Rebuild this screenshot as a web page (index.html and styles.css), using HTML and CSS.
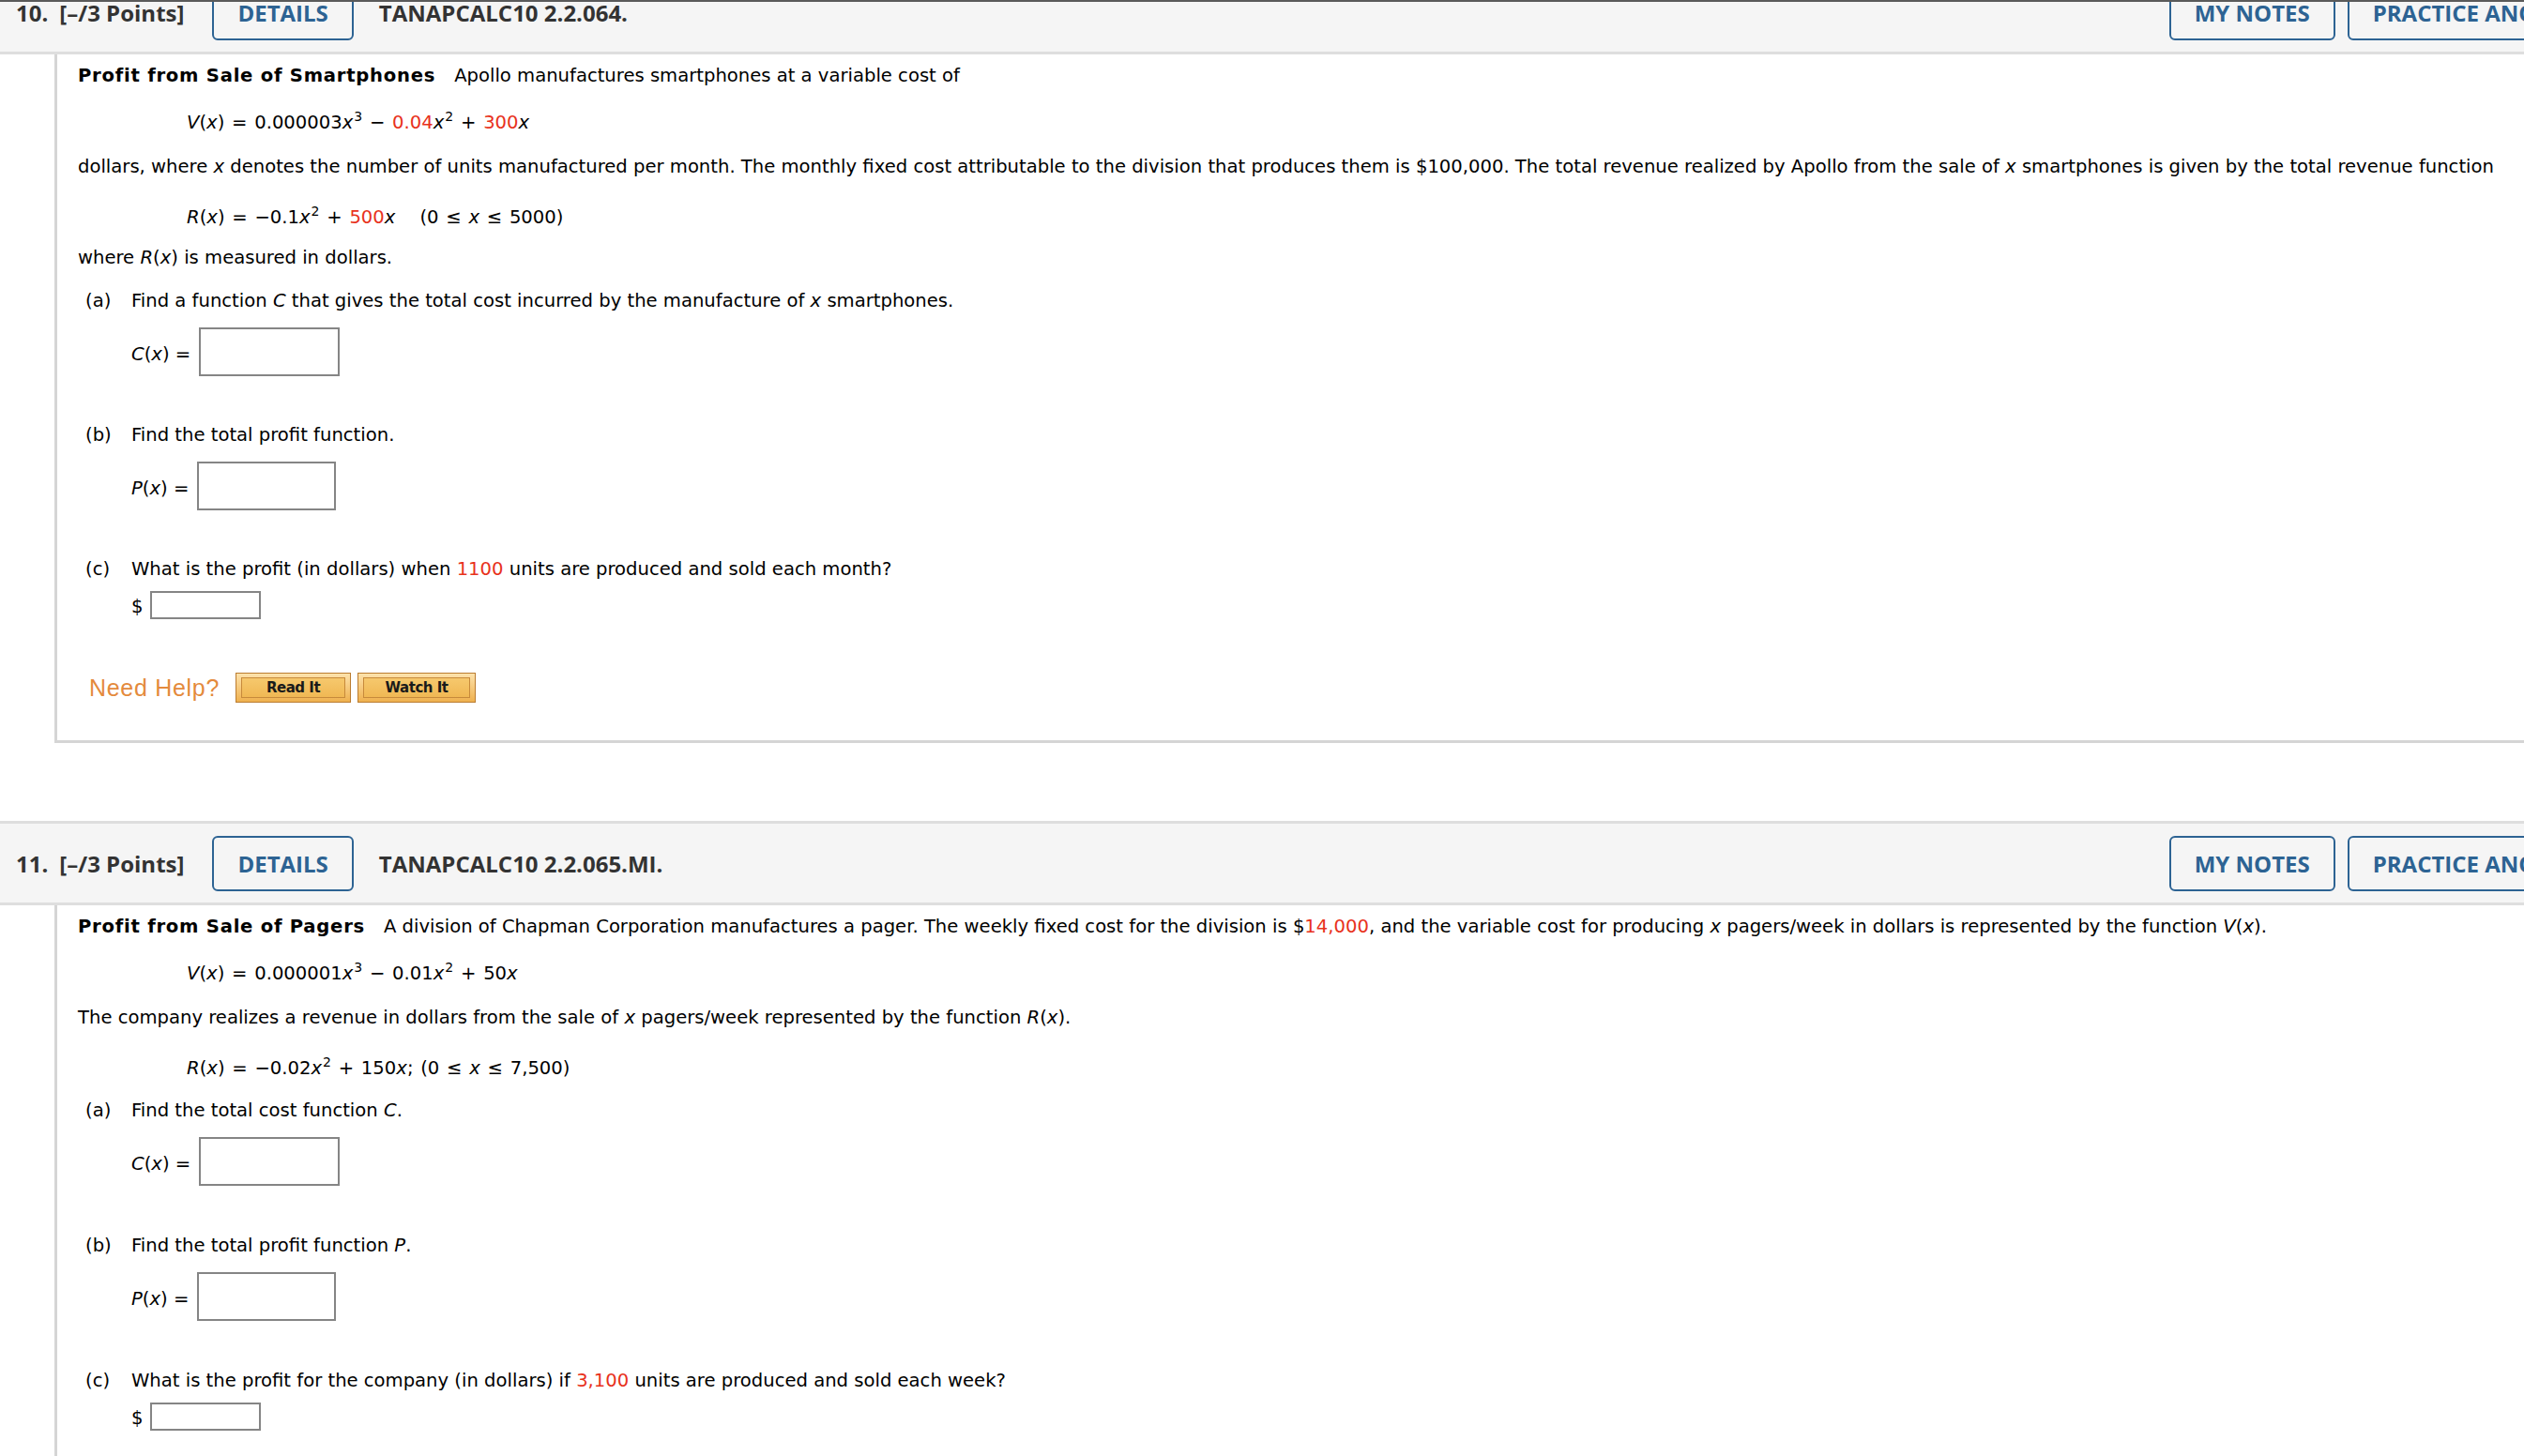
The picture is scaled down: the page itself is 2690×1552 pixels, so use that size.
FILE: index.html
```html
<!DOCTYPE html>
<html lang="en">
<head>
<meta charset="utf-8">
<title>Questions</title>
<link rel="stylesheet" href="styles.css">
</head>
<body>
<div class="topline"></div>
<div class="page">

  <section class="question">
    <header class="qhead">
      <span class="qnum">10.</span>
      <span class="qpts">[–/3 Points]</span>
      <button class="hbtn">DETAILS</button>
      <span class="qid">TANAPCALC10 2.2.064.</span>
      <div class="actions">
        <button class="hbtn">MY NOTES</button>
        <button class="hbtn">PRACTICE ANOTHER</button>
      </div>
    </header>
    <div class="qbody">
      <p class="txt"><b class="qtitle">Profit from Sale of Smartphones</b>Apollo manufactures smartphones at a variable cost of</p>
      <p class="eq eq-first"><i>V</i>(<i>x</i>) = 0.000003<i>x</i><sup>3</sup> − <span class="red">0.04</span><i>x</i><sup>2</sup> + <span class="red">300</span><i>x</i></p>
      <p class="txt txt-after-eq">dollars, where <i>x</i> denotes the number of units manufactured per month. The monthly fixed cost attributable to the division that produces them is $100,000. The total revenue realized by Apollo from the sale of <i>x</i> smartphones is given by the total revenue function</p>
      <p class="eq eq-after-txt"><i>R</i>(<i>x</i>) = −0.1<i>x</i><sup>2</sup> + <span class="red">500</span><i>x</i><span class="range">(0 ≤ <i>x</i> ≤ 5000)</span></p>
      <p class="txt txt-after-eq2">where <i>R</i>(<i>x</i>) is measured in dollars.</p>
      <div class="part part-after-txt"><span class="plabel">(a)</span><span>Find a function <i>C</i> that gives the total cost incurred by the manufacture of <i>x</i> smartphones.</span></div>
      <div class="answer"><span class="alabel"><i>C</i>(<i>x</i>) =</span><span class="abox"></span></div>
      <div class="part part-after-box"><span class="plabel">(b)</span><span>Find the total profit function.</span></div>
      <div class="answer"><span class="alabel"><i>P</i>(<i>x</i>) =</span><span class="abox abox-p"></span></div>
      <div class="part part-after-box"><span class="plabel">(c)</span><span>What is the profit (in dollars) when <span class="red">1100</span> units are produced and sold each month?</span></div>
      <div class="answer answer-dollar"><span class="dlabel">$</span><span class="dbox"></span></div>
      <div class="help">
        <span class="needhelp">Need Help?</span>
        <span class="hbtn2"><span class="hbtn2-in">Read It</span></span>
        <span class="hbtn2 hbtn2-wide"><span class="hbtn2-in">Watch It</span></span>
      </div>
    </div>
  </section>

  <section class="question">
    <header class="qhead">
      <span class="qnum">11.</span>
      <span class="qpts">[–/3 Points]</span>
      <button class="hbtn">DETAILS</button>
      <span class="qid">TANAPCALC10 2.2.065.MI.</span>
      <div class="actions">
        <button class="hbtn">MY NOTES</button>
        <button class="hbtn">PRACTICE ANOTHER</button>
      </div>
    </header>
    <div class="qbody qbody-open">
      <p class="txt"><b class="qtitle">Profit from Sale of Pagers</b>A division of Chapman Corporation manufactures a pager. The weekly fixed cost for the division is $<span class="red">14,000</span>, and the variable cost for producing <i>x</i> pagers/week in dollars is represented by the function <i>V</i>(<i>x</i>).</p>
      <p class="eq eq-first"><i>V</i>(<i>x</i>) = 0.000001<i>x</i><sup>3</sup> − 0.01<i>x</i><sup>2</sup> + 50<i>x</i></p>
      <p class="txt txt-after-eq">The company realizes a revenue in dollars from the sale of <i>x</i> pagers/week represented by the function <i>R</i>(<i>x</i>).</p>
      <p class="eq eq-after-txt"><i>R</i>(<i>x</i>) = −0.02<i>x</i><sup>2</sup> + 150<i>x</i>; (0 ≤ <i>x</i> ≤ 7,500)</p>
      <div class="part part-after-eq"><span class="plabel">(a)</span><span>Find the total cost function <i>C</i>.</span></div>
      <div class="answer"><span class="alabel"><i>C</i>(<i>x</i>) =</span><span class="abox"></span></div>
      <div class="part part-after-box2"><span class="plabel">(b)</span><span>Find the total profit function <i>P</i>.</span></div>
      <div class="answer"><span class="alabel"><i>P</i>(<i>x</i>) =</span><span class="abox abox-p"></span></div>
      <div class="part part-after-box2"><span class="plabel">(c)</span><span>What is the profit for the company (in dollars) if <span class="red">3,100</span> units are produced and sold each week?</span></div>
      <div class="answer answer-dollar"><span class="dlabel">$</span><span class="dbox"></span></div>
    </div>
  </section>

</div>
</body>
</html>
```

FILE: styles.css
```css
html, body {
  margin: 0;
  padding: 0;
  background: #ffffff;
  overflow: hidden;
}

body {
  font-family: "DejaVu Sans", Verdana, sans-serif;
  font-size: 19.6px;
  color: #000;
}

.topline {
  position: fixed;
  top: 0;
  left: 0;
  right: 0;
  height: 2px;
  background: #5a5a5a;
  z-index: 5;
}

.page {
  width: 2809px;
  margin-top: -32px;
}

.question + .question {
  margin-top: 83px;
}

/* ---------- header band ---------- */
.qhead {
  display: flex;
  align-items: center;
  background: #f5f5f5;
  border-top: 3px solid #dedede;
  border-bottom: 3px solid #dedede;
  padding: 13px 17px 12px 17px;
  font-family: "Open Sans", sans-serif;
  font-weight: 700;
  font-size: 24px;
  color: #333333;
}

.qnum {
  margin-right: 12px;
}

.qpts {
  margin-right: 30px;
}

.qid {
  margin-left: 27px;
}

.actions {
  margin-left: auto;
  display: flex;
  gap: 13px;
}

.hbtn {
  height: 59px;
  box-sizing: border-box;
  padding: 0 25px;
  border: 2px solid #2d6393;
  border-radius: 6px;
  background: transparent;
  color: #2d6393;
  font: inherit;
  display: flex;
  align-items: center;
  white-space: nowrap;
}

/* ---------- question body ---------- */
.qbody {
  margin-left: 58px;
  border-left: 3px solid #d5d5d5;
  border-bottom: 3px solid #d5d5d5;
  padding: 12px 0 40px 22px;
  line-height: 22px;
}

.qbody-open {
  border-bottom: none;
  padding-bottom: 80px;
}

.txt,
.eq {
  margin: 0;
  white-space: nowrap;
}

.qtitle {
  font-weight: bold;
  letter-spacing: 0.75px;
  margin-right: 20px;
}

.eq {
  margin-left: 116px;
  word-spacing: 1.5px;
}

.eq-first { margin-top: 28px; }
.txt-after-eq { margin-top: 25px; }
.eq-after-txt { margin-top: 32px; }
.txt-after-eq2 { margin-top: 21px; }

.range {
  margin-left: 26px;
}

sup {
  font-size: 14px;
  line-height: 0;
  vertical-align: 8px;
  margin-left: 1px;
}

.red {
  color: #e8321c;
}

.part {
  display: flex;
  margin-left: 8px;
  white-space: nowrap;
}

.plabel {
  width: 49px;
}

.part-after-txt { margin-top: 24px; }
.part-after-eq { margin-top: 23px; }
.part-after-box { margin-top: 52px; }
.part-after-box2 { margin-top: 53px; }

.answer {
  display: flex;
  align-items: center;
  margin: 17px 0 0 57px;
}

.alabel {
  padding-top: 6px;
  margin-right: 9px;
}

.abox {
  width: 150px;
  height: 52px;
  box-sizing: border-box;
  border: 2px solid #858585;
  background: #fff;
}

.abox-p {
  width: 148px;
}

.answer-dollar {
  margin-top: 12px;
}

.dlabel {
  margin-right: 8px;
  padding-top: 4px;
}

.dbox {
  width: 118px;
  height: 30px;
  box-sizing: border-box;
  border: 2px solid #858585;
  background: #fff;
}

/* ---------- need help ---------- */
.help {
  display: flex;
  align-items: center;
  margin: 57px 0 0 12px;
  gap: 7px;
}

.needhelp {
  font-family: "Liberation Sans", Arial, sans-serif;
  font-size: 25px;
  letter-spacing: 0.7px;
  color: #e48a3c;
  margin-right: 10px;
}

.hbtn2 {
  display: inline-flex;
  width: 123px;
  height: 32px;
  box-sizing: border-box;
  border: 1px solid #bb7c30;
  background: linear-gradient(#fde2ab, #efb14f);
  padding: 4px 5px;
}

.hbtn2-wide {
  width: 126px;
}

.hbtn2-in {
  flex: 1;
  display: flex;
  align-items: center;
  justify-content: center;
  border: 1px solid #c78a3b;
  background: linear-gradient(#f6c86d, #f0b854);
  font-family: "DejaVu Sans", Verdana, sans-serif;
  font-weight: bold;
  font-size: 15px;
  letter-spacing: -0.5px;
  color: #1a1a1a;
}
```
